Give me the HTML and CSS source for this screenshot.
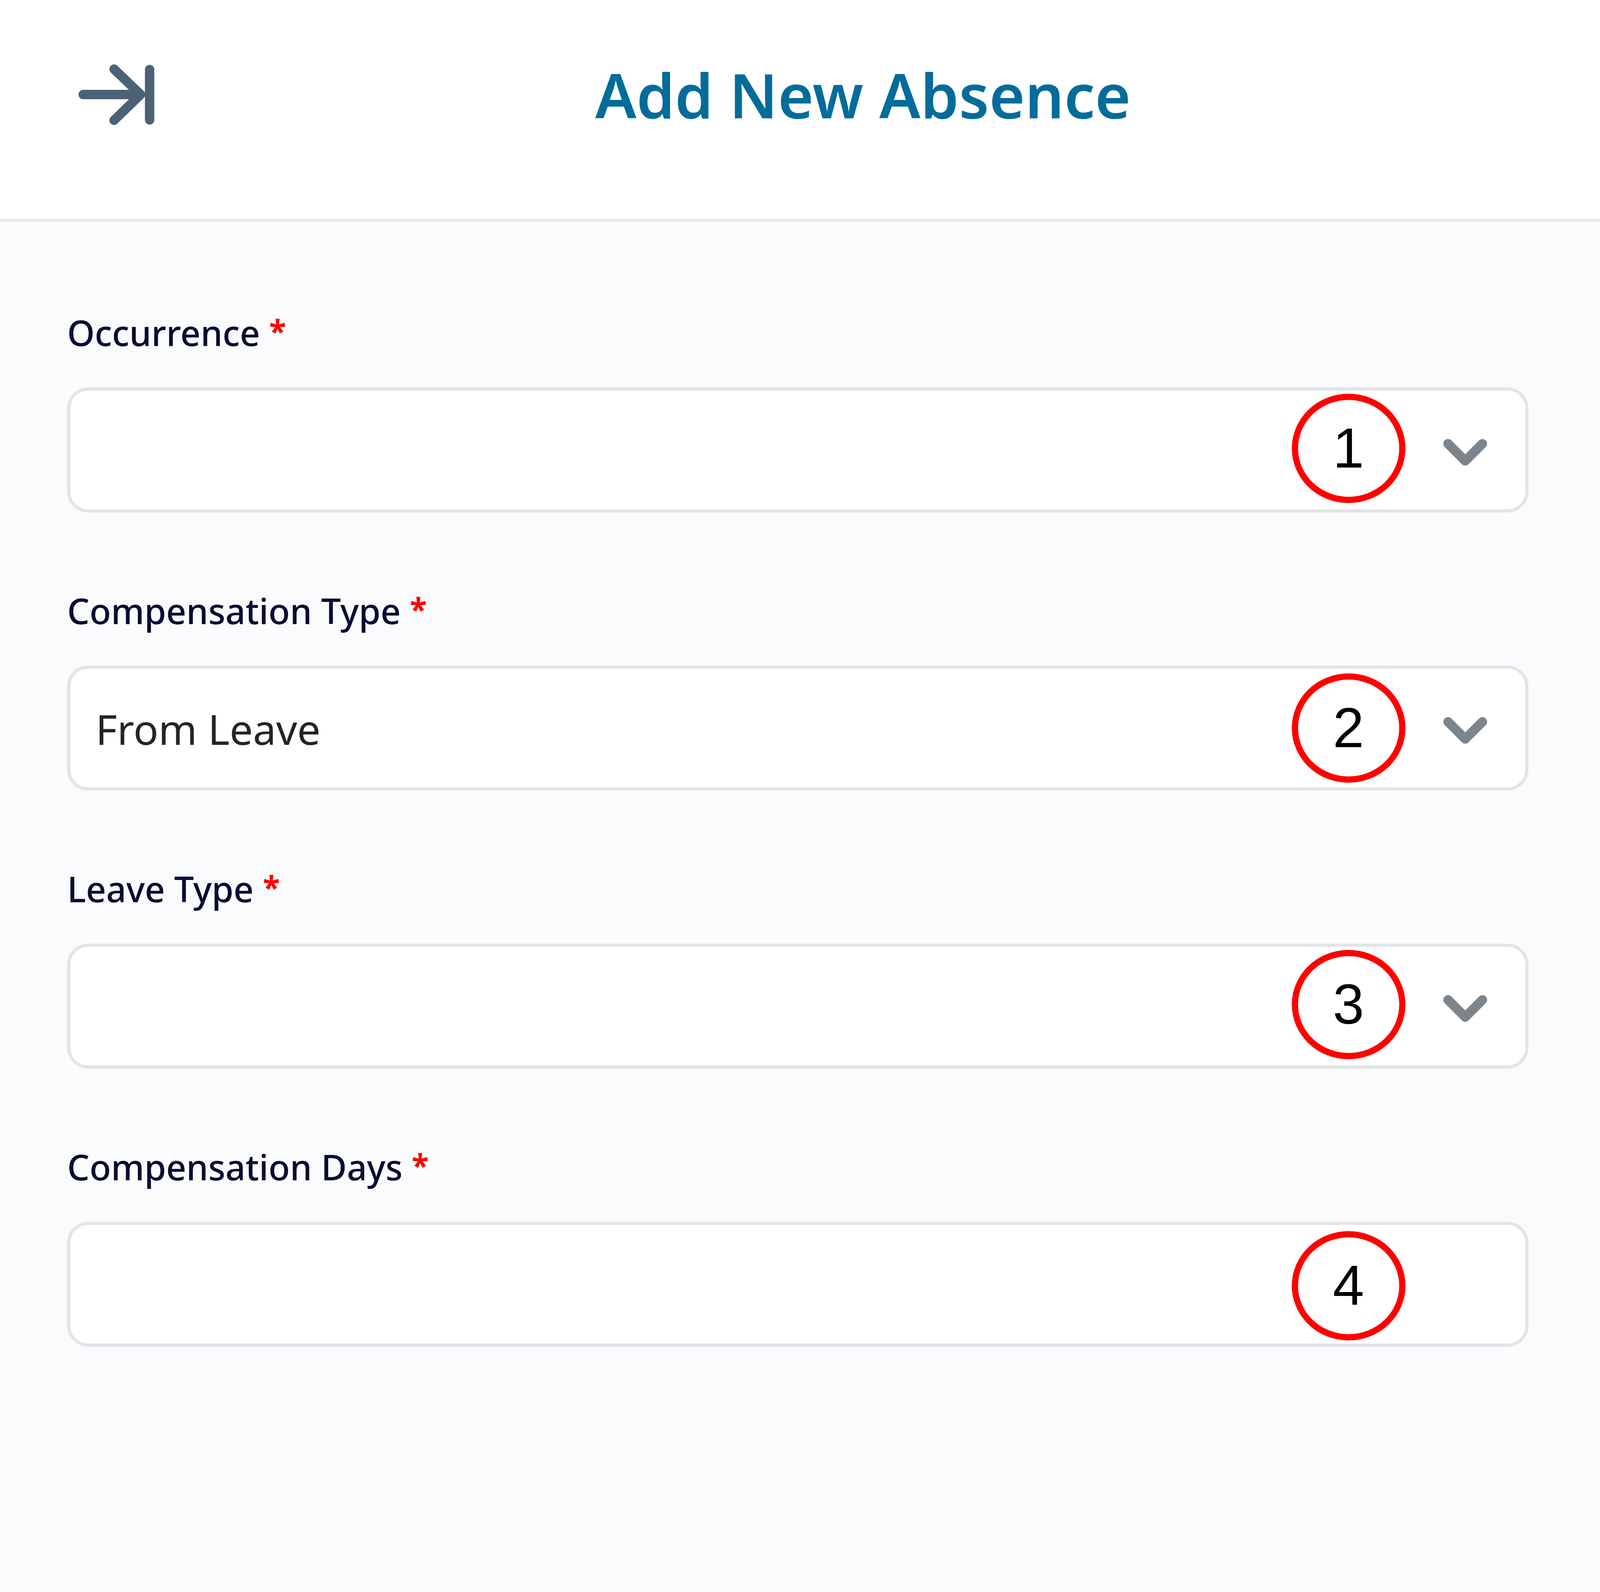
FILE: index.html
```html
<!DOCTYPE html>
<html lang="en">
<head>
<meta charset="utf-8">
<title>Add New Absence</title>
<link rel="stylesheet" href="styles.css">
</head>
<body>
<header class="header">
  <svg class="collapse-icon" viewBox="0 0 210 170" aria-hidden="true">
    <path d="M23 82H168M102 17L170 82L102 148M193 18V147"/>
  </svg>
  <h1 class="title">Add New Absence</h1>
</header>
<main class="form">
  <div class="field">
    <label class="label">Occurrence <span class="req">*</span></label>
    <div class="control">
      <svg class="chevron" viewBox="0 0 112 68" aria-hidden="true"><path d="M12 12L56 56L100 12"/></svg>
      <div class="marker marker-1">1</div>
    </div>
  </div>
  <div class="field">
    <label class="label">Compensation Type <span class="req">*</span></label>
    <div class="control">
      <span class="value">From Leave</span>
      <svg class="chevron" viewBox="0 0 112 68" aria-hidden="true"><path d="M12 12L56 56L100 12"/></svg>
      <div class="marker marker-2">2</div>
    </div>
  </div>
  <div class="field">
    <label class="label">Leave Type <span class="req">*</span></label>
    <div class="control">
      <svg class="chevron" viewBox="0 0 112 68" aria-hidden="true"><path d="M12 12L56 56L100 12"/></svg>
      <div class="marker marker-3">3</div>
    </div>
  </div>
  <div class="field">
    <label class="label">Compensation Days <span class="req">*</span></label>
    <div class="control">
      <div class="marker marker-4">4</div>
    </div>
  </div>
</main>
</body>
</html>
```
FILE: styles.css
```css
* { box-sizing: border-box; }
html, body { margin: 0; padding: 0; }
body {
  min-height: 4076px;
  display: flex;
  flex-direction: column;
  background: #fafbfd;
  font-family: "Noto Sans", sans-serif;
}
.header {
  height: 568px;
  flex: none;
  display: flex;
  align-items: flex-start;
  padding: 160px 0 0 4.64%;
  background: #fff;
  border-bottom: 8px solid #e8eaed;
}
.collapse-icon {
  width: 210px;
  height: 170px;
  flex: none;
}
.collapse-icon path {
  fill: none;
  stroke: #4b6279;
  stroke-width: 24;
  stroke-linecap: round;
  stroke-linejoin: round;
}
.title {
  margin: 0 0 0 28.77%;
  font-size: 157px;
  line-height: 164px;
  font-weight: 600;
  color: #026c9b;
}
.form {
  display: flex;
  flex-direction: column;
  gap: 196px;
  padding: 228px 4.48% 0 4.2%;
}
.field {
  display: flex;
  flex-direction: column;
  gap: 86px;
}
.label {
  display: block;
  height: 110px;
  font-size: 90px;
  line-height: 110px;
  font-weight: 500;
  color: #0b0b33;
}
.req {
  color: #f00;
  font-weight: 700;
  font-size: 80px;
  line-height: 0;
  vertical-align: 8px;
}
.control {
  position: relative;
  height: 320px;
  display: flex;
  align-items: center;
  padding: 0 2.62% 0 1.73%;
  background: #fff;
  border: 8px solid #e1e4e8;
  border-radius: 54px;
}
.value {
  margin-top: 4px;
  font-size: 106px;
  color: #212529;
}
.chevron {
  width: 112px;
  height: 68px;
  margin: 12px 0 0 auto;
  flex: none;
}
.chevron path {
  fill: none;
  stroke: #7c848c;
  stroke-width: 24;
  stroke-linecap: round;
  stroke-linejoin: round;
}
.marker {
  position: absolute;
  right: 8.24%;
  width: 291px;
  height: 280px;
  display: flex;
  align-items: center;
  justify-content: center;
  border: 16px solid #f00;
  border-radius: 50%;
  font-family: "Liberation Sans", sans-serif;
  font-size: 144px;
  color: #000;
}
.marker-1 { top: 8px; }
.marker-2 { top: 12px; }
.marker-3 { top: 8px; }
.marker-4 { top: 16px; }
```
